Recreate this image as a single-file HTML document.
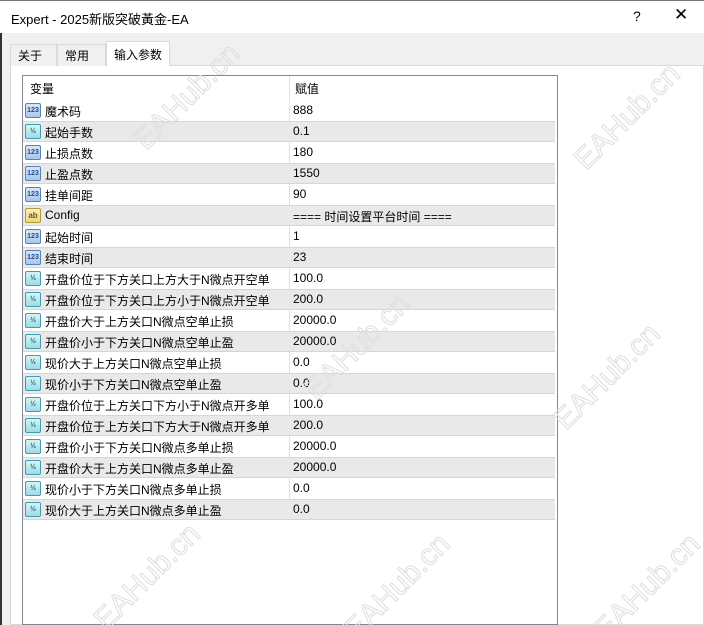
<!DOCTYPE html>
<html><head><meta charset="utf-8"><style>
*{margin:0;padding:0;box-sizing:border-box}
html,body{width:704px;height:625px;overflow:hidden}
body{background:#f0f0f0;font-family:"Liberation Sans","Noto Sans CJK SC",sans-serif;position:relative;color:#000}
.title{position:absolute;left:0;top:0;width:704px;height:33px;background:#fff;border-top:1px solid #777;font-size:13px}
.title .t{position:absolute;left:11px;top:8px}
.title .q{position:absolute;left:633px;top:7px;font-size:14px}
.title .x{position:absolute;left:674px;top:4px;font-size:17px}
.lstrip{position:absolute;left:0;top:33px;width:2px;height:592px;background:#333}
.tab{position:absolute;top:44px;height:22px;font-size:12px;border:1px solid #d9d9d9;border-bottom:none;padding:2px 0 0 7px;background:#f0f0f0}
.panel{position:absolute;left:10px;top:65px;width:694px;height:560px;background:#fff;border:1px solid #d9d9d9}
.tbl{position:absolute;left:22px;top:75px;width:536px;height:550px;border:1px solid #828790;background:#fff}
.hdr{position:absolute;left:0;top:0;width:534px;height:24px;font-size:12px}
.hdr span{position:absolute;top:4px}
.div{position:absolute;left:266px;top:0;width:1px;height:444px;background:#e0e0e0}
.row{position:absolute;left:0;width:532px;height:21px;font-size:12px}
.row.g{background:#e9e9e9;border-top:1px solid #d6d6d6;border-bottom:1px solid #d6d6d6}
.row .n{position:absolute;left:22px;top:3px;white-space:nowrap}
.row .v{position:absolute;left:270px;top:3px}
.row.g .n,.row.g .v{top:2px}
.ic{position:absolute;left:2px;top:3px;width:16px;height:15px;border:1px solid #5a82b8;border-radius:2px;font-size:7px;font-weight:bold;text-align:center;line-height:13px;color:#1f4f8f;background:linear-gradient(#d7e6f7,#a9c6ea)}
.row.g .ic{top:2px}
.ic.h{border-color:#3f9db0;background:linear-gradient(#d9f3f6,#9fdbe4);color:#1b6b7a}
.ic.a{border-color:#b49b3a;background:linear-gradient(#fbf1c2,#ecd77a);color:#6b5710;font-size:8px}
.wm{position:absolute;font-size:30px;color:transparent;-webkit-text-stroke:1px #dedede;transform:rotate(-45deg);font-family:"Liberation Sans",sans-serif}
</style></head><body>
<div class="title"><span class="t">Expert - 2025新版突破黃金-EA</span><span class="q">?</span><span class="x">✕</span></div>
<div class="lstrip"></div>
<div class="panel"></div>
<div class="tab" style="left:10px;width:47px">关于</div>
<div class="tab" style="left:57px;width:49px">常用</div>
<div class="tab" style="left:106px;top:41px;height:25px;width:64px;background:#fff;padding-top:4px">输入参数</div>
<div class="tbl">
<div class="hdr"><span style="left:7px">变量</span><span style="left:272px">赋值</span></div>
<div class="div"></div>
<div id="rows"></div>
</div>
<div class="wm" style="left:120px;top:80px">EAHub.cn</div>
<div class="wm" style="left:560px;top:100px">EAHub.cn</div>
<div class="wm" style="left:290px;top:330px">EAHub.cn</div>
<div class="wm" style="left:540px;top:360px">EAHub.cn</div>
<div class="wm" style="left:80px;top:560px">EAHub.cn</div>
<div class="wm" style="left:330px;top:570px">EAHub.cn</div>
<div class="wm" style="left:580px;top:570px">EAHub.cn</div>
<script>
var d=[["i","魔术码","888"],["h","起始手数","0.1"],["i","止损点数","180"],["i","止盈点数","1550"],["i","挂单间距","90"],["a","Config","==== 时间设置平台时间 ===="],["i","起始时间","1"],["i","结束时间","23"],
["h","开盘价位于下方关口上方大于N微点开空单","100.0"],["h","开盘价位于下方关口上方小于N微点开空单","200.0"],["h","开盘价大于上方关口N微点空单止损","20000.0"],["h","开盘价小于下方关口N微点空单止盈","20000.0"],["h","现价大于上方关口N微点空单止损","0.0"],["h","现价小于下方关口N微点空单止盈","0.0"],["h","开盘价位于上方关口下方小于N微点开多单","100.0"],["h","开盘价位于上方关口下方大于N微点开多单","200.0"],["h","开盘价小于下方关口N微点多单止损","20000.0"],["h","开盘价大于上方关口N微点多单止盈","20000.0"],["h","现价小于下方关口N微点多单止损","0.0"],["h","现价大于上方关口N微点多单止盈","0.0"]];
var h="";d.forEach(function(r,i){var t=r[0]=="i"?"123":r[0]=="h"?"½":"ab";var c=r[0]=="i"?"ic":"ic "+r[0];
h+='<div class="row'+(i%2?' g':'')+'" style="top:'+(24+i*21)+'px"><div class="'+c+'">'+t+'</div><span class="n">'+r[1]+'</span><span class="v">'+r[2]+'</span></div>';});
document.getElementById("rows").innerHTML=h;
</script>
</body></html>
